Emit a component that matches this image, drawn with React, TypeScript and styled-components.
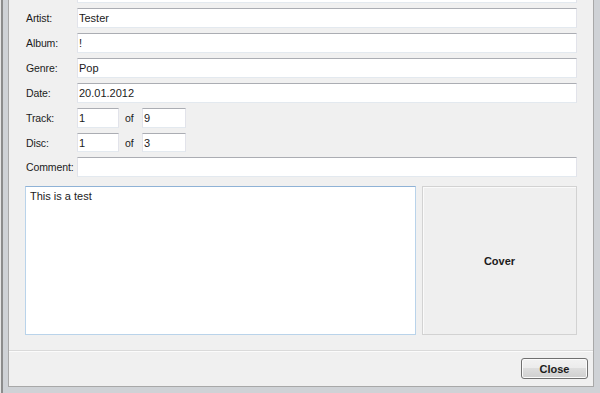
import styled, { createGlobalStyle } from "styled-components";

const GlobalStyle = createGlobalStyle`
    html, body {
        margin: 0;
        padding: 0;
        background: #e9ebee;
    }
    * {
        box-sizing: border-box;
    }
`;

const Frame = styled.div`
    width: 600px;
    height: 393px;
    display: flex;
    padding: 0 6px 6px 8px;
    background: linear-gradient(to right, #e6e6e6 0 1px, #8c8c8c 1px 3px, #cfd2d6 3px 600px);
    overflow: hidden;
    font-family: "Liberation Sans", Arial, sans-serif;
    font-size: 11px;
    color: #1b1b1b;
`;

const Dialog = styled.div`
    flex: 1;
    display: flex;
    flex-direction: column;
    background: #f0f0f0;
    border-left: 1px solid #a8a8a8;
    border-right: 1px solid #a8a8a8;
    border-bottom: 1px solid #a8a8a8;
    overflow: hidden;
`;

// scrolled a little: the first (title) row sits above the visible area
const Form = styled.div`
    flex: 1;
    display: flex;
    flex-direction: column;
    margin-top: -17px;
    padding: 0 16px 15px 16px;
`;

const FieldGrid = styled.div`
    display: grid;
    grid-template-columns: 52px 1fr;
    row-gap: 5px;
    align-items: center;
`;

const Label = styled.label`
    padding-left: 1px;
    font-size: 10.5px;
    letter-spacing: -0.1px;
    white-space: nowrap;
`;

const Input = styled.input<{ $width?: number; $height?: number }>`
    width: ${p => (p.$width ? `${p.$width}px` : "100%")};
    height: ${p => p.$height ?? 20}px;
    margin: 0;
    padding: 0 0 0 1px;
    border: 1px solid #e2e3ea;
    border-top-color: #abadb3;
    border-bottom-color: #e3e9ef;
    background: #fff;
    font-family: inherit;
    font-size: 11px;
    color: #1b1b1b;
    outline: none;
`;

const NumberRow = styled.div`
    display: flex;
    align-items: center;
`;

const Of = styled.span`
    width: 23px;
    padding-left: 6px;
    font-size: 10.5px;
`;

const Lower = styled.div`
    flex: 1;
    display: flex;
    gap: 6px;
    margin-top: 9px;
`;

const Notes = styled.textarea`
    flex: 1;
    margin: 0;
    resize: none;
    padding: 3px 4px;
    border: 1px solid #b9d3ea;
    border-top-color: #8fb2d6;
    background: #fff;
    font-family: inherit;
    font-size: 11px;
    color: #1b1b1b;
    outline: none;
`;

const Cover = styled.div`
    width: 155px;
    display: flex;
    align-items: center;
    justify-content: center;
    background: #efefef;
    border: 1px solid #d2d2d2;
    box-shadow: inset 1px 1px 0 #fafafa;
    font-weight: bold;
`;

const ButtonBar = styled.div`
    height: 36px;
    display: flex;
    justify-content: flex-end;
    align-items: flex-start;
    padding: 7px 5px 0 0;
    border-top: 1px solid #dadada;
    box-shadow: inset 0 1px 0 #fbfbfb;
`;

const Button = styled.button`
    width: 67px;
    height: 21px;
    border: 1px solid #707070;
    border-radius: 3px;
    background: linear-gradient(#f2f2f2 0%, #ebebeb 50%, #dddddd 50%, #cfcfcf 100%);
    box-shadow: inset 0 0 0 1px #fbfbfb;
    font-family: inherit;
    font-size: 11px;
    font-weight: bold;
    color: #1b1b1b;
    padding: 0;
`;

export default function App() {
    return (
        <>
            <GlobalStyle />
            <Frame>
                <Dialog>
                    <Form>
                        <FieldGrid>
                            <Label aria-label="Title" />
                            <Input defaultValue="" />
                            <Label>Artist:</Label>
                            <Input defaultValue="Tester" />
                            <Label>Album:</Label>
                            <Input defaultValue="!" />
                            <Label>Genre:</Label>
                            <Input defaultValue="Pop" />
                            <Label>Date:</Label>
                            <Input defaultValue="20.01.2012" />
                            <Label>Track:</Label>
                            <NumberRow>
                                <Input $width={42} defaultValue="1" />
                                <Of>of</Of>
                                <Input $width={44} defaultValue="9" />
                            </NumberRow>
                            <Label>Disc:</Label>
                            <NumberRow>
                                <Input $width={42} $height={19} defaultValue="1" />
                                <Of>of</Of>
                                <Input $width={44} $height={19} defaultValue="3" />
                            </NumberRow>
                            <Label>Comment:</Label>
                            <Input defaultValue="" />
                        </FieldGrid>
                        <Lower>
                            <Notes defaultValue="This is a test" />
                            <Cover>Cover</Cover>
                        </Lower>
                    </Form>
                    <ButtonBar>
                        <Button>Close</Button>
                    </ButtonBar>
                </Dialog>
            </Frame>
        </>
    );
}
